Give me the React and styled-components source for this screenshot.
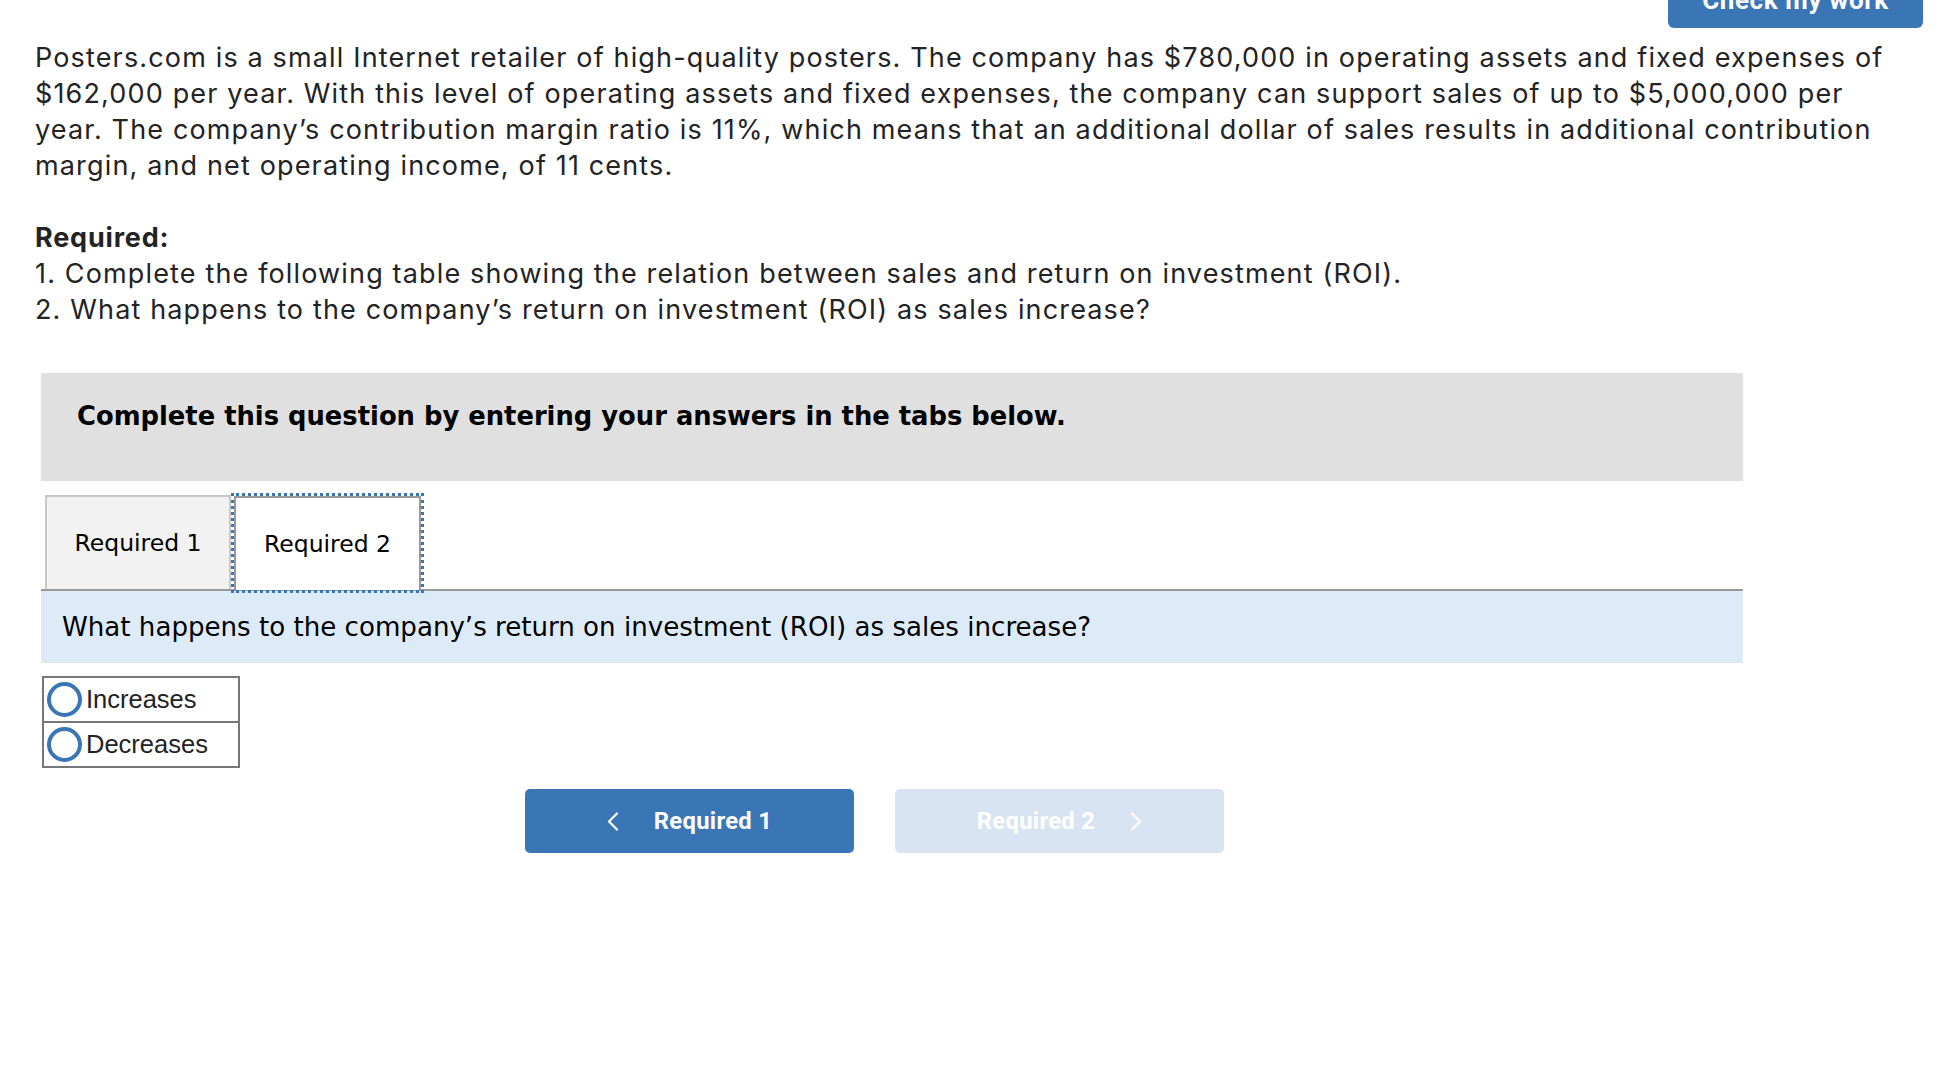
import React from 'react';
import styled, { createGlobalStyle } from 'styled-components';

const GlobalStyle = createGlobalStyle`
  html, body {
    margin: 0;
    padding: 0;
    background: #ffffff;
  }
  body {
    font-family: Inter, Lato, "Liberation Sans", sans-serif;
    color: #222222;
  }
`;

const Page = styled.div`
  padding: 0 16px 0 35px;
`;

const TopBar = styled.div`
  display: flex;
  justify-content: flex-end;
  height: 28px;
  overflow: hidden;
`;

const CheckButton = styled.button`
  width: 255px;
  height: 56px;
  margin-top: -28px;
  border: none;
  border-radius: 6px;
  background: #3a76b6;
  color: #ffffff;
  font-family: Roboto, "Liberation Sans", sans-serif;
  font-weight: 700;
  font-size: 26px;
  letter-spacing: 0.6px;
  cursor: pointer;
`;

const Prose = styled.p`
  margin: 12px 0 0;
  font-size: 27px;
  line-height: 36px;
  letter-spacing: 1.15px;
  color: #232323;
`;

const Strong = styled.strong`
  font-weight: 700;
  letter-spacing: 0.8px;
`;

const Question = styled.section`
  width: 1702px;
  margin: 45px 0 0 6px;
`;

const Instructions = styled.div`
  background: #e0e0e0;
  padding: 28px 36px 50px;
  font-family: "DejaVu Sans", Verdana, sans-serif;
  font-weight: 700;
  font-size: 25.8px;
  line-height: 30px;
  color: #000000;
`;

const TabList = styled.div`
  display: flex;
  align-items: flex-end;
  padding: 14px 0 0 4px;
  border-bottom: 2px solid #999999;
`;

const Tab = styled.button`
  box-sizing: border-box;
  width: ${p => (p.$active ? 187 : 186)}px;
  height: 94px;
  margin-left: ${p => (p.$active ? 3 : 0)}px;
  padding: 0;
  border: 2px solid ${p => (p.$active ? '#999999' : '#c8c8c8')};
  border-bottom: none;
  background: ${p => (p.$active ? '#ffffff' : '#f2f2f2')};
  font-family: "DejaVu Sans", Verdana, sans-serif;
  font-size: 23.5px;
  color: #000000;
  cursor: pointer;
  outline: ${p => (p.$active ? '3px dotted #3a76b6' : 'none')};
  outline-offset: 0;
  margin-bottom: ${p => (p.$active ? '-1px' : '0')};
  position: relative;
`;

const Prompt = styled.div`
  background: #dcebf7;
  height: 72px;
  display: flex;
  align-items: center;
  padding-left: 21px;
  font-family: "DejaVu Sans", Verdana, sans-serif;
  font-size: 26.1px;
  color: #000000;
`;

const Choices = styled.div`
  width: 194px;
  margin: 13px 0 0 1px;
  border: 2px solid #777777;
`;

const Choice = styled.label`
  display: flex;
  align-items: center;
  gap: 4px;
  height: 43px;
  padding-left: 3px;
  font-family: "Liberation Sans", Arial, sans-serif;
  font-size: 25.5px;
  color: #222222;
  cursor: pointer;

  & + & {
    border-top: 2px solid #777777;
  }
`;

const Radio = styled.span`
  width: 27px;
  height: 27px;
  border: 4px solid #3a76b6;
  border-radius: 50%;
  flex-shrink: 0;
`;

const Nav = styled.div`
  display: flex;
  justify-content: center;
  gap: 41px;
  padding-right: 35px;
  margin-top: 21px;
`;

const NavButton = styled.button`
  width: 329px;
  height: 64px;
  border: none;
  border-radius: 5px;
  background: ${p => (p.disabled ? '#d8e4f1' : '#3a76b6')};
  color: #ffffff;
  font-family: Roboto, "Liberation Sans", sans-serif;
  font-weight: 700;
  font-size: 23.8px;
  letter-spacing: 0.3px;
  display: flex;
  align-items: center;
  justify-content: center;
  gap: 35px;
  cursor: ${p => (p.disabled ? 'default' : 'pointer')};
`;

const Chevron = ({ dir }) => (
  <svg width="12" height="19" viewBox="0 0 12 19" fill="none" stroke="currentColor" strokeWidth="2.2" strokeLinecap="round" strokeLinejoin="round">
    {dir === 'left' ? <polyline points="10,1.5 2,9.5 10,17.5" /> : <polyline points="2,1.5 10,9.5 2,17.5" />}
  </svg>
);

const App = () => {
  return (
    <>
      <GlobalStyle />
      <Page>
        <TopBar>
          <CheckButton type="button">Check my work</CheckButton>
        </TopBar>
        <Prose>
          Posters.com is a small Internet retailer of high-quality posters. The company has $780,000 in operating assets and fixed expenses of<br />
          $162,000 per year. With this level of operating assets and fixed expenses, the company can support sales of up to $5,000,000 per<br />
          year. The company’s contribution margin ratio is 11%, which means that an additional dollar of sales results in additional contribution<br />
          margin, and net operating income, of 11 cents.
        </Prose>
        <Prose as="div" style={{ marginTop: 36 }}>
          <Strong>Required:</Strong><br />
          1. Complete the following table showing the relation between sales and return on investment (ROI).<br />
          2. What happens to the company’s return on investment (ROI) as sales increase?
        </Prose>
        <Question>
          <Instructions>Complete this question by entering your answers in the tabs below.</Instructions>
          <TabList>
            <Tab type="button">Required 1</Tab>
            <Tab type="button" $active>Required 2</Tab>
          </TabList>
          <Prompt>What happens to the company’s return on investment (ROI) as sales increase?</Prompt>
          <Choices>
            <Choice><Radio />Increases</Choice>
            <Choice><Radio />Decreases</Choice>
          </Choices>
          <Nav>
            <NavButton type="button"><Chevron dir="left" />Required 1</NavButton>
            <NavButton type="button" disabled>Required 2<Chevron dir="right" /></NavButton>
          </Nav>
        </Question>
      </Page>
    </>
  );
};

export default App;
